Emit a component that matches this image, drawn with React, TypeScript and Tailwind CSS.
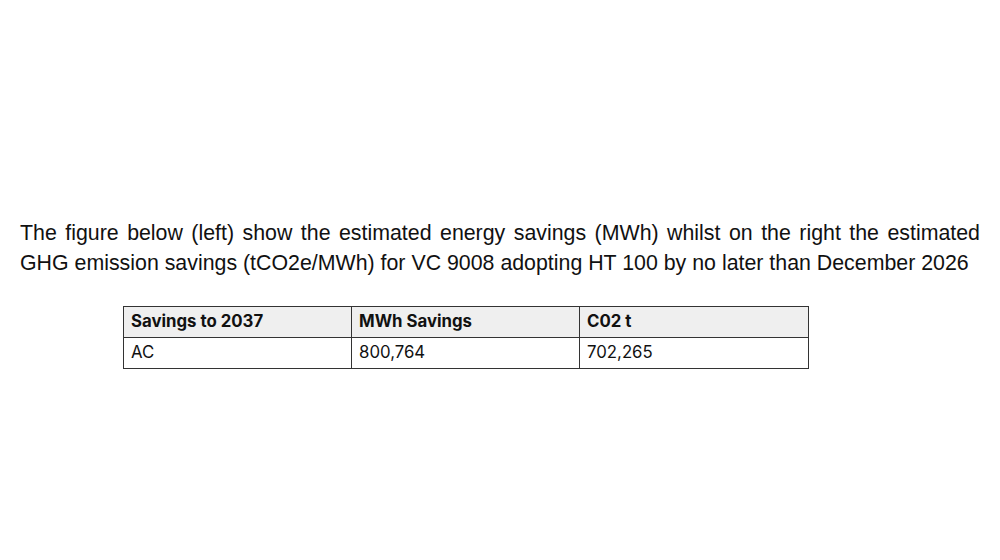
export default function App() {
  return (
    <div className="w-[1000px] h-[560px] bg-white overflow-hidden flex flex-col pt-[218px]">
      <p
        className="mx-[20px] text-justify text-[21.35px] leading-[30px] text-[#111]"
        style={{ fontFamily: '"Liberation Sans", Arial, sans-serif' }}
      >
        The figure below (left) show the estimated energy savings (MWh) whilst on the right the estimated GHG emission savings (tCO2e/MWh) for VC 9008 adopting HT 100 by no later than December 2026
      </p>
      <table
        className="ml-[123px] mt-[28px] w-[686px] border-collapse text-[16.8px] text-[#111] table-fixed"
        style={{ fontFamily: 'Inter, "Noto Sans", sans-serif' }}
      >
        <colgroup>
          <col className="w-[228px]" />
          <col className="w-[228px]" />
          <col />
        </colgroup>
        <thead>
          <tr className="bg-[#efefef] h-[31px]">
            <th className="border border-[#333] text-left font-bold px-[7px] py-0">Savings to 2037</th>
            <th className="border border-[#333] text-left font-bold px-[7px] py-0">MWh Savings</th>
            <th className="border border-[#333] text-left font-bold px-[7px] py-0">C02 t</th>
          </tr>
        </thead>
        <tbody>
          <tr className="h-[31px]">
            <td className="border border-[#333] px-[7px] py-0">AC</td>
            <td className="border border-[#333] px-[7px] py-0">800,764</td>
            <td className="border border-[#333] px-[7px] py-0">702,265</td>
          </tr>
        </tbody>
      </table>
    </div>
  );
}
